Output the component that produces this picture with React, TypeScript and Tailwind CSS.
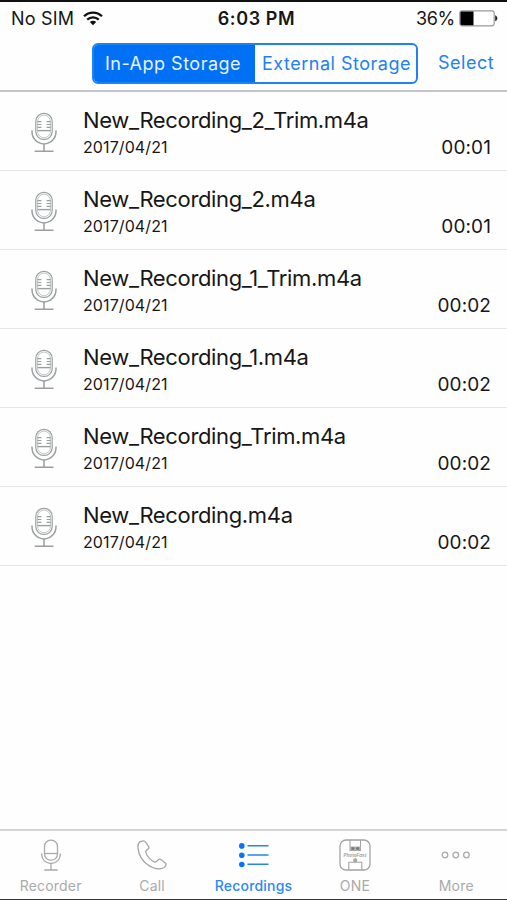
import type { ReactNode } from "react";

type Recording = {
  name: string;
  date: string;
  duration: string;
};

type TabProps = {
  label: string;
  active?: boolean;
  children: ReactNode;
};

const recordings: Recording[] = [
  { name: "New_Recording_2_Trim.m4a", date: "2017/04/21", duration: "00:01" },
  { name: "New_Recording_2.m4a", date: "2017/04/21", duration: "00:01" },
  { name: "New_Recording_1_Trim.m4a", date: "2017/04/21", duration: "00:02" },
  { name: "New_Recording_1.m4a", date: "2017/04/21", duration: "00:02" },
  { name: "New_Recording_Trim.m4a", date: "2017/04/21", duration: "00:02" },
  { name: "New_Recording.m4a", date: "2017/04/21", duration: "00:02" },
];

const WifiIcon = () => (
  <svg width="20" height="15" viewBox="0 0 20 15" fill="none" stroke="#111" strokeWidth="2.2">
    <path d="M1 5.2C6 .3 14 .3 19 5.2" />
    <path d="M4.2 8.6c3.3-3 8.3-3 11.6 0" />
    <path d="M10 14.2 6.8 11c1.8-1.6 4.6-1.6 6.4 0z" fill="#111" stroke="none" />
  </svg>
);

const BatteryIcon = () => (
  <svg width="39" height="17" viewBox="0 0 39 17">
    <rect x="0.8" y="0.8" width="34.4" height="15" rx="2.5" fill="#fff" stroke="#999" strokeWidth="1.2" />
    <path d="M2.8 1.4H14.5v13.8H2.8a1.4 1.4 0 0 1-1.4-1.4v-11a1.4 1.4 0 0 1 1.4-1.4z" fill="#000" />
    <path d="M36.2 5.3c2.8 1 2.8 5 0 6z" fill="#222" />
  </svg>
);

const MicIcon = () => (
  <svg width="28" height="42" viewBox="0 0 28 42" fill="none" stroke="#9b9fa0" strokeWidth="1.2">
    <rect x="5.8" y="1.4" width="16.4" height="26" rx="8" />
    <rect x="7.6" y="3.2" width="12.8" height="22.4" rx="6.2" stroke="#b4b7b8" strokeWidth="0.8" />
    <path d="M7.4 9.7h4M7.4 12.5h4M7.4 15.3h4M16.6 9.7h4M16.6 12.5h4M16.6 15.3h4" />
    <path d="M7.6 18.6h12.8" strokeWidth="1.4" />
    <path d="M2 18.5v1.2a12 12.2 0 0 0 24 0v-1.2" strokeWidth="1.5" />
    <path d="M14 32v7M4.7 39.2h18.8" strokeWidth="1.5" />
  </svg>
);

const RecorderIcon = () => (
  <svg width="22" height="32" viewBox="0 0 22 32" fill="none" stroke="#a9a9a9" strokeWidth="1.3">
    <rect x="4.5" y="1.2" width="13" height="20" rx="6.2" />
    <path d="M4.5 14.5h13" />
    <path d="M1.7 14.5v1a9.3 9 0 0 0 18.6 0v-1M11 24.5V31M4.3 31h13.4" />
  </svg>
);

const CallIcon = () => (
  <svg width="30" height="30" viewBox="0 0 30 30" fill="none" stroke="#a5a5a5" strokeWidth="1.3" strokeLinejoin="round">
    <path d="M2.7 2.1C1 3.4.8 5.7 1.1 8.6c.7 6.3 4.1 12 9.3 15.9 4.3 3.3 9.6 4.7 13.8 4.2 2.3-.3 3.9-1.7 4.6-3.2.5-1 .2-1.8-.6-2.5l-4-3.2c-1-.8-2-.9-3 0l-1.7 1.6c-.7.7-1.6.8-2.4.4-3.9-2-6.8-5.4-8.2-9.2-.3-.9-.1-1.7.6-2.3l1.6-1.2c.9-.7 1-1.8.4-2.8L8.6 2.2C7.8 1 6.6.7 5.4 1c-1 .2-1.9.5-2.7 1.1z" />
  </svg>
);

const ListIcon = () => (
  <svg width="32" height="26" viewBox="0 0 32 26" fill="#0875f8">
    <circle cx="4.8" cy="3.9" r="2.8" />
    <circle cx="4.8" cy="13.2" r="2.8" />
    <circle cx="4.8" cy="22.5" r="2.8" />
    <path d="M10.5 3.7h21M10.5 13h21M10.5 22.3h21" stroke="#2483f8" strokeWidth="1.6" />
  </svg>
);

const DeviceIcon = () => (
  <svg width="32" height="32" viewBox="0 0 32 32" fill="none" stroke="#a3a3a3" strokeWidth="1.1">
    <rect x="1" y="1" width="30" height="30" rx="6" strokeWidth="1.3" />
    <path d="M11 1v10.5h10.5V1" />
    <path d="M11 7.5h10.5v4H11z" fill="#b5b5b5" stroke="none" />
    <path d="M12.4 8.2h3v2.6h-3zM17.2 8.2h3v2.6h-3z" fill="#777" stroke="none" />
    <text x="16" y="17.7" textAnchor="middle" fontSize="4.6" fontStyle="italic" fontWeight="600" textLength="23" fill="#999" stroke="none">
      PhotoFast
    </text>
    <circle cx="16.2" cy="21.3" r="1.5" fill="#aaa" />
    <path d="M9.8 31v-7.7h13V31" />
  </svg>
);

const MoreIcon = () => (
  <svg width="30" height="10" viewBox="0 0 30 10" fill="none" stroke="#a9a9a9" strokeWidth="1.3">
    <circle cx="4" cy="5" r="2.8" />
    <circle cx="14.8" cy="5" r="2.8" />
    <circle cx="25.4" cy="5" r="2.8" />
  </svg>
);

const StatusBar = () => (
  <div className="grid h-[35px] grid-cols-3 items-center pb-[2px] text-[18px] leading-none text-[#171717]">
    <div className="flex items-center gap-[9px] pl-[11px]">
      <span className="tracking-[0.2px]">No SIM</span>
      <WifiIcon />
    </div>
    <span className="pl-[6px] text-center font-semibold tracking-[0.6px]">6:03 PM</span>
    <div className="flex items-center justify-end gap-[4px] pr-[9px]">
      <span className="tracking-[-0.3px]">36%</span>
      <BatteryIcon />
    </div>
  </div>
);

const NavBar = () => (
  <div className="flex h-[55px] items-start border-b-2 border-[#c4c4c4] pl-[92px] pt-[6px] text-[18px] text-[#2180f3]">
    <div className="flex h-[41px] w-[326px] overflow-hidden rounded-[6px] border-2 border-[#2180f3] tracking-[0.5px]">
      <button className="w-[161px] bg-[#0070f5] pr-[3px] text-[#e8f2ff]">In-App Storage</button>
      <button className="flex-1 whitespace-nowrap pl-[2px]">External Storage</button>
    </div>
    <button className="ml-[20px] h-[38px] tracking-[0.5px]">Select</button>
  </div>
);

const RecordingRow = ({ name, date, duration }: Recording) => (
  <li className="flex h-[79px] border-b border-[#e6e6e6] pl-[30px] pr-[16px]">
    <div className="w-[53px] pt-[20px]">
      <MicIcon />
    </div>
    <div className="flex-1 pt-[14px]">
      <p className="whitespace-nowrap text-[22px] leading-[28px] tracking-[-0.35px]">{name}</p>
      <p className="mt-[3px] text-[16px] leading-[20px] tracking-[0.1px]">{date}</p>
    </div>
    <span className="pt-[44px] text-[19px] leading-[24px] tracking-[0.1px]">{duration}</span>
  </li>
);

const Tab = ({ label, active, children }: TabProps) => (
  <button
    className={`flex flex-col items-center text-[14px] leading-[18px] tracking-[0.2px] ${
      active ? "font-medium text-[#2b87fa]" : "text-[#aaa]"
    }`}
  >
    <span className="flex h-[46px] items-center pt-[2px]">{children}</span>
    <span>{label}</span>
  </button>
);

export default function App() {
  return (
    <div className="flex h-[900px] w-[507px] flex-col overflow-hidden border-b border-t-2 border-b-[#333] border-t-[#111] bg-[#fefefe] font-['Inter',sans-serif] text-[#171717]">
      <StatusBar />
      <NavBar />
      <ul className="flex-1">
        {recordings.map((recording) => (
          <RecordingRow key={recording.name} {...recording} />
        ))}
      </ul>
      <div className="grid h-[70px] grid-cols-5 border-t-2 border-[#d5d5d5]">
        <Tab label="Recorder">
          <RecorderIcon />
        </Tab>
        <Tab label="Call">
          <CallIcon />
        </Tab>
        <Tab label="Recordings" active>
          <ListIcon />
        </Tab>
        <Tab label="ONE">
          <DeviceIcon />
        </Tab>
        <Tab label="More">
          <MoreIcon />
        </Tab>
      </div>
    </div>
  );
}
